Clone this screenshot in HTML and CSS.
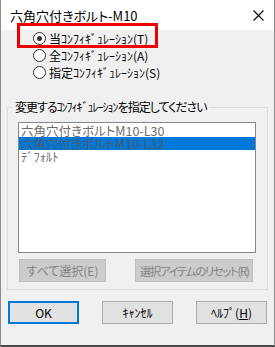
FILE: index.html
```html
<!doctype html>
<html>
<head>
	<meta charset="utf-8">
	<title>六角穴付きボルト-M10</title>
	<link rel="stylesheet" href="styles.css">
</head>
<body>
	<div class="window">
		<div class="titlebar">
			<span class="title">六角穴付きボルト-M10</span>
			<svg class="close" width="11" height="11" viewBox="0 0 11 11">
				<path d="M0.5 0.5 L10.5 10.5 M10.5 0.5 L0.5 10.5" stroke="#000" stroke-width="1.1" fill="none"/>
			</svg>
		</div>

		<div class="content">
			<div class="radios">
				<label class="radio"><span class="dot checked"></span>当ｺﾝﾌｨｷﾞｭﾚｰｼｮﾝ(T)</label>
				<label class="radio"><span class="dot"></span>全ｺﾝﾌｨｷﾞｭﾚｰｼｮﾝ(A)</label>
				<label class="radio"><span class="dot"></span>指定ｺﾝﾌｨｷﾞｭﾚｰｼｮﾝ(S)</label>
			</div>

			<fieldset class="group">
				<legend>変更するｺﾝﾌｨｷﾞｭﾚｰｼｮﾝを指定してください</legend>
				<div class="listbox">
					<div class="item">六角穴付きボルトM10-L30</div>
					<div class="item selected">六角穴付きボルトM10-L32</div>
					<div class="item">ﾃﾞﾌｫﾙﾄ</div>
				</div>
				<div class="group-buttons">
					<button class="btn disabled select-all">すべて選択(E)</button>
					<button class="btn disabled reset">選択アイテムのリセット(R)</button>
				</div>
			</fieldset>

			<div class="actions">
				<button class="btn default">OK</button>
				<button class="btn">ｷｬﾝｾﾙ</button>
				<button class="btn">ﾍﾙﾌﾟ(<u>H</u>)</button>
			</div>
		</div>

		<div class="highlight"></div>
	</div>
</body>
</html>
```

FILE: styles.css
```css
html, body { margin: 0; padding: 0; background: #fff }
body {
	font-family: "Noto Sans CJK JP", "Liberation Sans", sans-serif;
	font-size: 12px;
	font-feature-settings: "palt";
	color: #000;
}
.window {
	position: relative;
	width: 275px;
	height: 347px;
	box-sizing: border-box;
	background: #f0f0f0;
	border: 1px solid #8c8c8c;
	border-top: 0;
	border-bottom: 2px solid #4a4a4a;
}
.titlebar {
	height: 30px;
	background: #fff;
	display: flex;
	align-items: center;
	padding-left: 9px;
	padding-right: 10px;
	justify-content: space-between;
	box-sizing: border-box;
}
.title { line-height: 14px; margin-top: 1px; font-size: 13px }
.close { display: block }
.content { padding: 0 6px }

.radios { padding-left: 26px }
.radio {
	display: flex;
	align-items: center;
	height: 17px;
	line-height: 17px;
	white-space: nowrap;
}
.dot {
	width: 13px;
	height: 13px;
	box-sizing: border-box;
	border: 1px solid #333;
	border-radius: 50%;
	background: #fff;
	margin-right: 3px;
	display: flex;
	align-items: center;
	justify-content: center;
}
.dot.checked::after {
	content: "";
	width: 5px;
	height: 5px;
	border-radius: 50%;
	background: #333;
}

.group {
	margin: 19px 0 0 0;
	padding: 8px 11px 7px 10px;
	border: 1px solid #dcdcdc;
	min-width: 0;
}
.group legend {
	margin-left: -5px;
	padding: 0 2px;
	line-height: 14px;
	letter-spacing: -1px;
	white-space: nowrap;
}
.listbox {
	width: 238px;
	height: 131px;
	box-sizing: border-box;
	border: 1px solid #828790;
	background: #fff;
	padding-top: 1px;
}
.item {
	height: 13px;
	line-height: 13px;
	padding-left: 2px;
	font-size: 12.5px;
	color: #6d6d6d;
	white-space: nowrap;
}
.item.selected {
	background: #0078d7;
	color: #505a6a;
}

.btn {
	font: inherit;
	font-feature-settings: "palt";
	height: 23px;
	padding: 0;
	box-sizing: border-box;
	background: #e1e1e1;
	border: 1px solid #adadad;
	color: #000;
	line-height: 20px;
	white-space: nowrap;
}
.btn.disabled {
	background: #cccccc;
	border-color: #bfbfbf;
	color: #838383;
}
.group-buttons {
	display: flex;
	gap: 29px;
	margin-top: 6px;
	padding-left: 1px;
}
.select-all { width: 87px }
.reset {
	width: 118px;
	font-size: 11.5px;
	letter-spacing: -1.4px;
}

.actions {
	display: flex;
	gap: 23px;
	margin-top: 11px;
	padding-left: 1px;
}
.actions .btn { width: 71px }
.btn.default { border: 2px solid #0078d7 }

.highlight {
	position: absolute;
	left: 16px;
	top: 23px;
	width: 141px;
	height: 25px;
	box-sizing: border-box;
	border: 3px solid #ee0000;
}
```
